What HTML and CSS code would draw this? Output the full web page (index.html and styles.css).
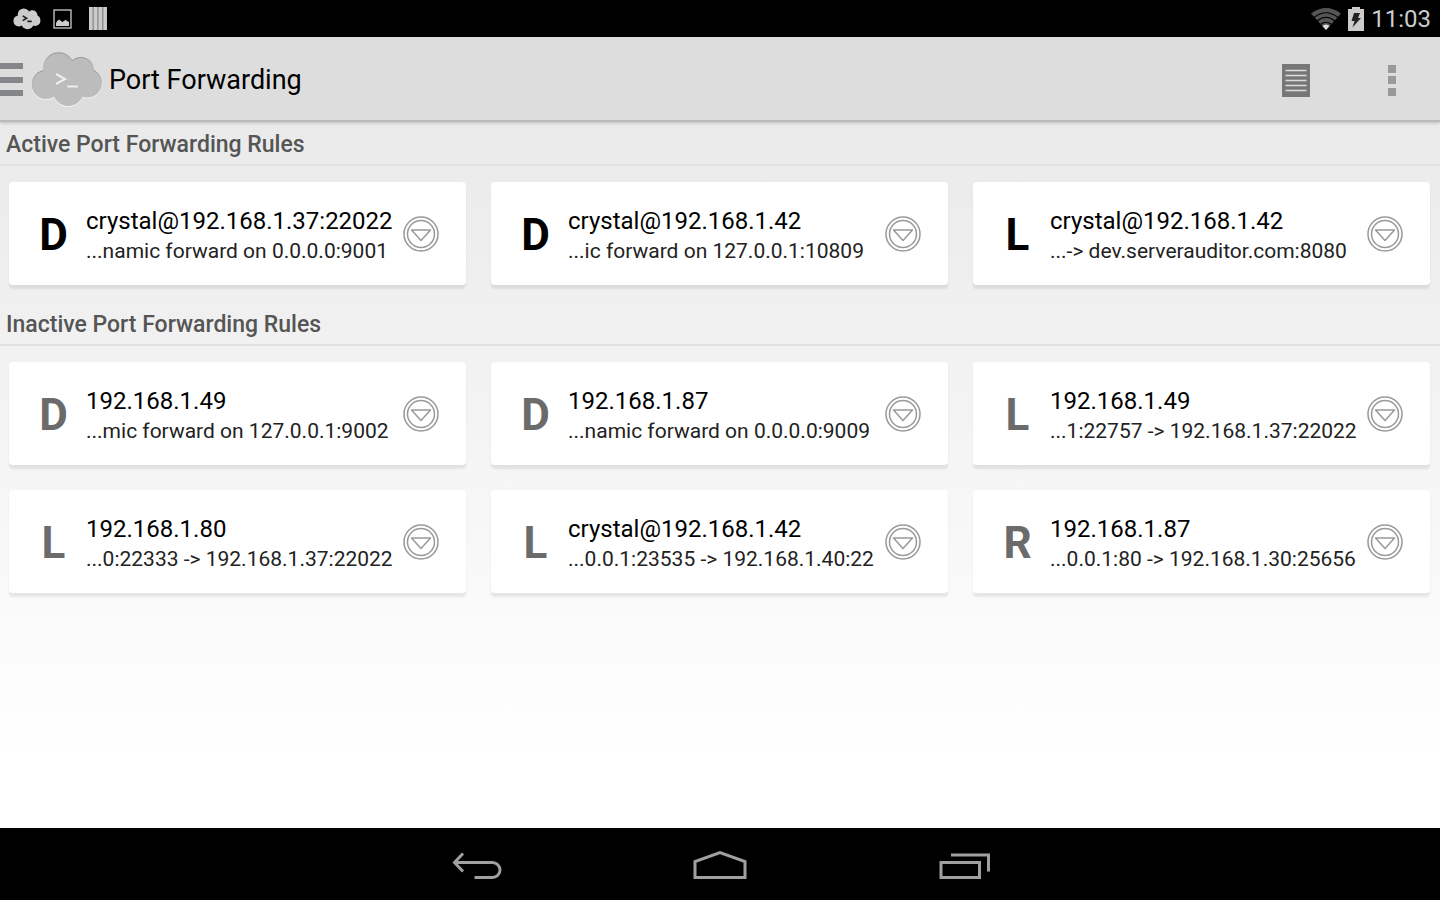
FILE: index.html
```html
<!DOCTYPE html>
<html lang="en">
<head>
    <meta charset="UTF-8">
    <meta name="viewport" content="width=device-width, initial-scale=1.0">
    <title>Port Forwarding</title>
    <link rel="stylesheet" href="styles.css">
</head>
<body>

    <!-- Shared icons -->
    <svg class="defs" width="0" height="0" aria-hidden="true">
        <symbol id="expand" viewBox="0 0 36 36">
            <g fill="none" stroke="#999" stroke-width="1.5" stroke-linejoin="round">
                <circle cx="18" cy="18" r="17"/>
                <circle cx="18" cy="18" r="13.5"/>
                <path d="M8.500 14h19L18 24.500z"/>
            </g>
        </symbol>
        <symbol id="cloud" viewBox="0 0 70 56">
            <circle cx="14" cy="33" r="14"/>
            <circle cx="26.700" cy="16.500" r="15.300"/>
            <circle cx="48.700" cy="19" r="13"/>
            <circle cx="55.500" cy="31.500" r="14"/>
            <circle cx="36.300" cy="38.700" r="15.300"/>
            <path d="M14 20h40v22H14z"/>
        </symbol>
    </svg>

    <div class="statusbar">
        <div class="status-icons">
            <svg width="28" height="22" viewBox="0 0 70 56" aria-hidden="true">
                <use href="#cloud" width="70" height="56" fill="#ccc"/>
                <path d="M24 20l10 6-10 6M36 34h11" fill="none" stroke="#222" stroke-width="4"/>
            </svg>
            <svg width="19" height="20" viewBox="0 0 19 20" aria-hidden="true">
                <rect x="1" y="1" width="17" height="18" fill="none" stroke="#ccc" stroke-width="1.3"/>
                <path d="M3 17v-3q2-4 4-3l2 2 2-1q2-2 3 0l2 1v4z" fill="#ccc"/>
            </svg>
            <svg width="18" height="23" viewBox="0 0 18 23" aria-hidden="true">
                <path d="M0 0h18v23H0z" fill="#888"/>
                <path d="M0 0h3.500v23H0zM4.800 0h3.500v23H4.800zM9.600 0h3.500v23H9.600zM14.400 0h3.500v23h-3.500z" fill="#ccc"/>
            </svg>
        </div>
        <div class="status-right">
            <svg width="30" height="22" viewBox="0 0 30 22" aria-hidden="true">
                <path d="M15 22L0 5.500Q15-5.500 30 5.500z" fill="#555"/>
                <path d="M3 9.500Q15 0 27 9.500M6 13Q15 5.500 24 13M9.500 16.500Q15 12 20.500 16.500" fill="none" stroke="#000" stroke-width="1.2"/>
                <path d="M15 22l-3.500-4Q15 15 18.500 18z" fill="#ddd"/>
            </svg>
            <svg width="16" height="24" viewBox="0 0 16 24" aria-hidden="true">
                <path d="M0 2h4V0h8v2h4v22H0z" fill="#ccc"/>
                <path d="M6 6h6l-2 5h3L4.500 20.500 6.500 14H3.500z" fill="#222"/>
            </svg>
            <span>11:03</span>
        </div>
    </div>

    <header class="actionbar">
        <button class="menu-btn" aria-label="Open menu">
            <svg width="23" height="34" viewBox="0 0 23 34"><path d="M0 0h23v6H0zM0 14h23v6H0zM0 27h23v6H0z" fill="#85868a"/></svg>
        </button>
        <svg class="logo" width="70" height="56" viewBox="0 0 70 56" aria-hidden="true">
            <use href="#cloud" y="1" width="70" height="56" fill="#f2f2f2"/>
            <use href="#cloud" y="-1" width="70" height="56" fill="#999"/>
            <use href="#cloud" width="70" height="56" fill="#bcbcbc"/>
            <path d="M24 22l9 5-9 5M35.500 34.500H46" fill="none" stroke="#eee" stroke-width="2.200"/>
        </svg>
        <h1>Port Forwarding</h1>
        <button class="action-btn" aria-label="Log">
            <svg width="28" height="33" viewBox="0 0 28 33">
                <path d="M0 0h28v33H0z" fill="#777"/>
                <path d="M3.500 6.500h21M3.500 11.500h21M3.500 16.500h21M3.500 21.500h21M3.500 26.500h21" stroke="#ddd" stroke-width="1.600"/>
            </svg>
        </button>
        <button class="action-btn" aria-label="More options">
            <svg width="8" height="31" viewBox="0 0 8 31"><path d="M0 0h8v8H0zM0 11h8v8H0zM0 23h8v8H0z" fill="#999"/></svg>
        </button>
    </header>

    <main>
        <h2>Active Port Forwarding Rules</h2>
        <div class="rules">
            <div class="card">
                <span class="type">D</span>
                <div class="info"><h3>crystal@192.168.1.37:22022</h3><p>...namic forward on 0.0.0.0:9001</p></div>
                <button aria-label="Rule options"><svg width="36" height="36"><use href="#expand"/></svg></button>
            </div>
            <div class="card">
                <span class="type">D</span>
                <div class="info"><h3>crystal@192.168.1.42</h3><p>...ic forward on 127.0.0.1:10809</p></div>
                <button aria-label="Rule options"><svg width="36" height="36"><use href="#expand"/></svg></button>
            </div>
            <div class="card">
                <span class="type">L</span>
                <div class="info"><h3>crystal@192.168.1.42</h3><p>...-&gt; dev.serverauditor.com:8080</p></div>
                <button aria-label="Rule options"><svg width="36" height="36"><use href="#expand"/></svg></button>
            </div>
        </div>

        <h2>Inactive Port Forwarding Rules</h2>
        <div class="rules inactive">
            <div class="card">
                <span class="type">D</span>
                <div class="info"><h3>192.168.1.49</h3><p>...mic forward on 127.0.0.1:9002</p></div>
                <button aria-label="Rule options"><svg width="36" height="36"><use href="#expand"/></svg></button>
            </div>
            <div class="card">
                <span class="type">D</span>
                <div class="info"><h3>192.168.1.87</h3><p>...namic forward on 0.0.0.0:9009</p></div>
                <button aria-label="Rule options"><svg width="36" height="36"><use href="#expand"/></svg></button>
            </div>
            <div class="card">
                <span class="type">L</span>
                <div class="info"><h3>192.168.1.49</h3><p>...1:22757 -&gt; 192.168.1.37:22022</p></div>
                <button aria-label="Rule options"><svg width="36" height="36"><use href="#expand"/></svg></button>
            </div>
            <div class="card">
                <span class="type">L</span>
                <div class="info"><h3>192.168.1.80</h3><p>...0:22333 -&gt; 192.168.1.37:22022</p></div>
                <button aria-label="Rule options"><svg width="36" height="36"><use href="#expand"/></svg></button>
            </div>
            <div class="card">
                <span class="type">L</span>
                <div class="info"><h3>crystal@192.168.1.42</h3><p>...0.0.1:23535 -&gt; 192.168.1.40:22</p></div>
                <button aria-label="Rule options"><svg width="36" height="36"><use href="#expand"/></svg></button>
            </div>
            <div class="card">
                <span class="type">R</span>
                <div class="info"><h3>192.168.1.87</h3><p>...0.0.1:80 -&gt; 192.168.1.30:25656</p></div>
                <button aria-label="Rule options"><svg width="36" height="36"><use href="#expand"/></svg></button>
            </div>
        </div>
    </main>

    <nav class="navbar">
        <button aria-label="Back">
            <svg width="54" height="30" viewBox="0 0 54 30"><path d="M25.500 28.500H43.500a7.500 7.500 0 0 0 0-15H5M14 4.500L5.500 13.500l8.500 9"/></svg>
        </button>
        <button aria-label="Home">
            <svg width="54" height="30" viewBox="0 0 54 30"><path d="M2 28.500V12.500L27 3.500l25 9v16z"/></svg>
        </button>
        <button aria-label="Recent apps">
            <svg width="54" height="30" viewBox="0 0 54 30"><path d="M4 13.500h38.500v15H4zM14 6h37.500v16.500"/></svg>
        </button>
    </nav>

</body>
</html>
```
FILE: styles.css
```css
* {
    box-sizing: border-box;
}
body {
    font-family: Roboto, Arial, sans-serif;
    margin: 0;
    min-height: 100vh;
    display: flex;
    flex-direction: column;
    background-color: #fff;
    color: #000;
}
h1, h2, h3, p {
    margin: 0;
    font-weight: 400;
}
button {
    background: none;
    border: none;
    padding: 0;
    cursor: pointer;
    display: flex;
    align-items: center;
    justify-content: center;
}
svg {
    display: block;
}
.defs {
    position: absolute;
}

/* Status bar */
.statusbar {
    background-color: #000;
    color: #ccc;
    height: 37px;
    padding: 0 9px 0 13px;
    display: flex;
    align-items: center;
    justify-content: space-between;
    font-size: 24px;
}
.status-icons {
    display: flex;
    align-items: center;
    gap: 12px;
}
.status-icons svg:last-child {
    margin-left: 5px;
}
.status-right {
    display: flex;
    align-items: center;
    gap: 7px;
}

/* Action bar */
.actionbar {
    background-color: #ddd;
    height: 85px;
    padding-top: 3px;
    border-bottom: 2px solid #bbb;
    box-shadow: 0 1px 3px rgba(0, 0, 0, 0.2);
    display: flex;
    align-items: center;
    position: relative;
}
.logo {
    margin: 0 7px 0 9px;
}
.actionbar h1 {
    font-size: 27px;
    flex: 1;
}
.action-btn {
    width: 96px;
    height: 80px;
}

/* Rules */
main {
    flex: 1;
    background: linear-gradient(#eaeaea, #f2f2f2 35%, #fff 90%);
}
h2 {
    height: 44px;
    padding: 0 6px;
    border-bottom: 2px solid #e0e0e0;
    color: #555;
    font-size: 23px;
    font-weight: 500;
    line-height: 46px;
}
.rules {
    display: grid;
    grid-template-columns: repeat(3, 1fr);
    gap: 25px;
    padding: 16px 10px 17px 9px;
}
.card {
    background-color: #fff;
    border-radius: 4px;
    box-shadow: 0 4px 2px rgba(0, 0, 0, 0.08);
    height: 103px;
    padding-right: 27px;
    display: flex;
    align-items: center;
}
.type {
    width: 77px;
    padding: 2px 0 0 12px;
    flex-shrink: 0;
    text-align: center;
    font-size: 44px;
    font-weight: 700;
}
.inactive .type {
    color: #6b6b6b;
}
.info {
    flex: 1;
    min-width: 0;
    padding-top: 2px;
    white-space: nowrap;
}
.info h3 {
    font-size: 24px;
    line-height: 32px;
}
.info p {
    color: #222;
    font-size: 21px;
    line-height: 28px;
}

/* Navigation bar */
.navbar {
    background-color: #000;
    height: 72px;
    display: flex;
    justify-content: center;
    gap: 68px;
}
.navbar button {
    width: 176px;
}
.navbar path {
    fill: none;
    stroke: #a0a0a0;
    stroke-width: 3;
}
```
